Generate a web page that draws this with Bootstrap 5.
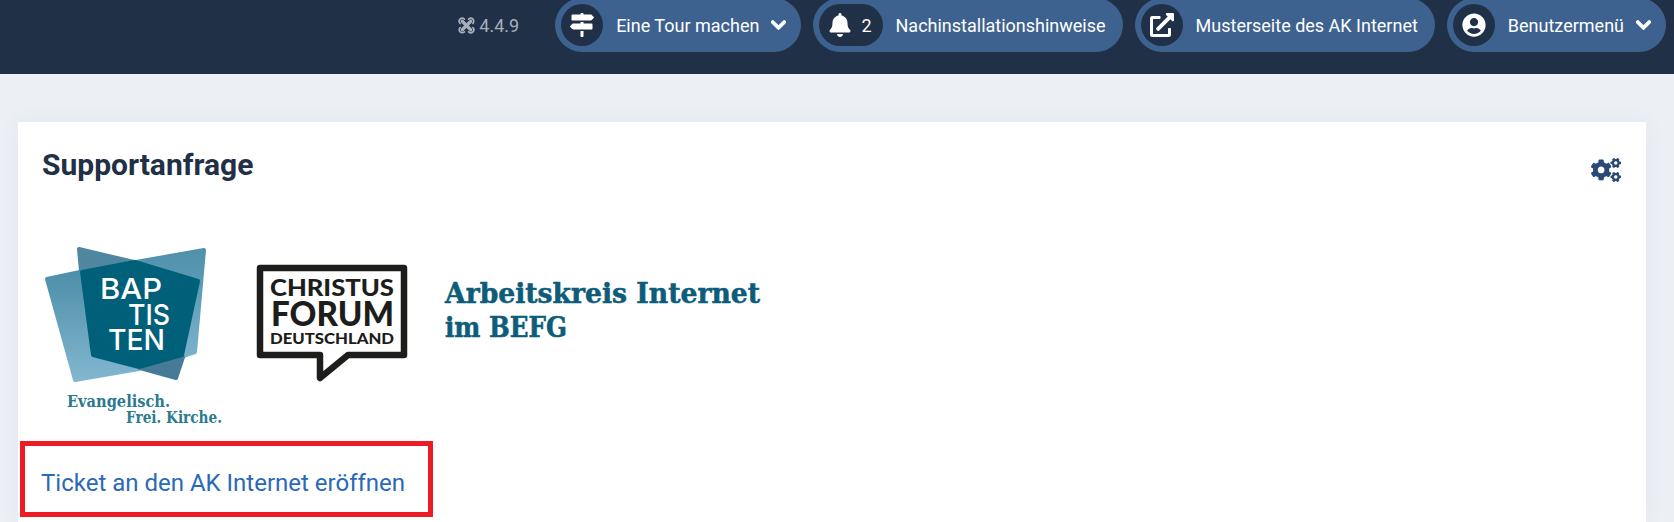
<!DOCTYPE html>
<html lang="de">
<head>
  <meta charset="UTF-8">
  <title>Supportanfrage</title>
  <link href="https://cdn.jsdelivr.net/npm/bootstrap@5.3.0/dist/css/bootstrap.min.css" rel="stylesheet">
  <style>
    html, body {
      height: 522px;
      overflow: hidden;
    }
    body {
      background: #ecf0f5;
      font-family: Roboto, "Liberation Sans", sans-serif;
      color: #1f3047;
    }
    .top-head {
      height: 74px;
      background: #1f3047;
      padding-right: 8px;
      gap: 12px;
    }
    .ver-info {
      color: #a7afba;
      font-size: 18px;
      height: 50px;
      margin-right: 24px;
      gap: 4px;
    }
    .ver-info svg {
      width: 17px;
      height: 17px;
    }
    .head-pill {
      height: 54px;
      margin-top: -2px;
      padding: 0 15px 0 6px;
      border-radius: 27px;
      background: #3e628f;
      color: #fff;
      font-size: 18px;
      text-decoration: none;
      white-space: nowrap;
    }
    .head-pill.no-arrow {
      padding-right: 17px;
    }
    .pill-icon {
      height: 42px;
      min-width: 42px;
      border-radius: 21px;
      background: #1f3047;
      margin-right: 13px;
      gap: 10px;
    }
    .pill-icon svg {
      height: 24px;
      width: 24px;
      fill: #fff;
    }
    .pill-icon.with-count {
      padding: 0 11px 0 10px;
    }
    .pill-icon.with-count svg {
      width: 22px;
    }
    .pill-arrow {
      width: 15px;
      height: 18px;
      fill: #fff;
      stroke: #fff;
      stroke-width: 30;
      margin-left: 12px;
    }
    .main-box {
      margin: 48px 28px 0 18px;
      height: 400px;
      padding: 22px 24px 0 23px;
      background: #fff;
      box-shadow: 0 0 20px rgba(60, 90, 140, .06);
    }
    .box-title {
      font-size: 30px;
      font-weight: 700;
      line-height: 42px;
      margin: 0 0 0 1px;
      color: #1f3047;
    }
    .box-gears {
      width: 30px;
      height: 24px;
      fill: #2a4a73;
      margin: 14px 1px 0 0;
    }
    .logo-strip {
      display: block;
      width: 731px;
      height: 196px;
      margin-top: 54px;
    }
    .ticket-box {
      width: 413px;
      height: 76px;
      margin: 5px 0 0 -21px;
      padding: 20px 0 0 16px;
      border: 5px solid #ed1c24;
      font-size: 24px;
      line-height: 34px;
    }
    .ticket-box a {
      color: #2a69b8;
      text-decoration: none;
    }
  </style>
</head>
<body>
  <header class="top-head d-flex justify-content-end align-items-start">
    <div class="ver-info d-flex align-items-center">
      <svg viewBox="0 0 16 16" fill="none" stroke="#a7afba" stroke-linecap="round">
        <path stroke-width="3" d="M4 4l8 8M12 4l-8 8"/>
        <path stroke-width="1.6" d="M2 6a2.8 2.8 0 0 1 4-4M10 2a2.8 2.8 0 0 1 4 4M14 10a2.8 2.8 0 0 1-4 4M6 14a2.8 2.8 0 0 1-4-4"/>
      </svg>
      <span>4.4.9</span>
    </div>

    <a href="#" class="head-pill d-flex align-items-center">
      <span class="pill-icon d-flex align-items-center justify-content-center">
        <svg viewBox="0 0 512 512"><path d="M507.31 84.69L464 41.37c-6-6-14.14-9.37-22.63-9.37H288V16c0-8.84-7.16-16-16-16h-32c-8.84 0-16 7.16-16 16v16H56c-13.25 0-24 10.75-24 24v80c0 13.25 10.75 24 24 24h385.37c8.49 0 16.62-3.37 22.63-9.37l43.31-43.31c6.25-6.26 6.25-16.38 0-22.63zM224 496c0 8.84 7.16 16 16 16h32c8.84 0 16-7.16 16-16V384h-64v112zm232-272H288v-32h-64v32H70.63c-8.49 0-16.62 3.37-22.63 9.37L4.69 276.69c-6.25 6.25-6.25 16.38 0 22.63L48 342.63c6 6 14.14 9.37 22.63 9.37H456c13.25 0 24-10.75 24-24v-80c0-13.25-10.75-24-24-24z"/></svg>
      </span>
      <span>Eine Tour machen</span>
      <svg class="pill-arrow" viewBox="0 0 448 512"><path d="M207.029 381.476L12.686 187.132c-9.373-9.373-9.373-24.569 0-33.941l22.667-22.667c9.357-9.357 24.522-9.375 33.901-.04L224 284.505l154.745-154.021c9.379-9.335 24.544-9.317 33.901.04l22.667 22.667c9.373 9.373 9.373 24.569 0 33.941L240.971 381.476c-9.373 9.372-24.569 9.372-33.942 0z"/></svg>
    </a>

    <a href="#" class="head-pill no-arrow d-flex align-items-center">
      <span class="pill-icon with-count d-flex align-items-center justify-content-center">
        <svg viewBox="0 0 448 512"><path d="M224 512c35.32 0 63.97-28.65 63.97-64H160.03c0 35.35 28.65 64 63.97 64zm215.39-149.71c-19.32-20.76-55.47-51.99-55.47-154.29 0-77.7-54.48-139.9-127.94-155.16V32c0-17.67-14.32-32-31.98-32s-31.98 14.33-31.98 32v20.84C118.56 68.1 64.08 130.3 64.08 208c0 102.3-36.15 133.53-55.47 154.29-6 6.45-8.66 14.16-8.61 21.71.11 16.4 12.98 32 32.1 32h383.8c19.12 0 32-15.6 32.1-32 .05-7.55-2.61-15.27-8.61-21.71z"/></svg>
        <span>2</span>
      </span>
      <span>Nachinstallationshinweise</span>
    </a>

    <a href="#" class="head-pill no-arrow d-flex align-items-center">
      <span class="pill-icon d-flex align-items-center justify-content-center">
        <svg viewBox="0 0 512 512"><path d="M432,320H400a16,16,0,0,0-16,16V448H64V128H208a16,16,0,0,0,16-16V80a16,16,0,0,0-16-16H48A48,48,0,0,0,0,112V464a48,48,0,0,0,48,48H400a48,48,0,0,0,48-48V336A16,16,0,0,0,432,320ZM488,0h-128c-21.37,0-32.05,25.91-17,41l35.73,35.73L135,320.37a24,24,0,0,0,0,34L157.67,377a24,24,0,0,0,34,0L435.28,133.32,471,169c15,15,41,4.5,41-17V24A24,24,0,0,0,488,0Z"/></svg>
      </span>
      <span>Musterseite des AK Internet</span>
    </a>

    <a href="#" class="head-pill d-flex align-items-center">
      <span class="pill-icon d-flex align-items-center justify-content-center">
        <svg viewBox="0 0 496 512"><path d="M248 8C111 8 0 119 0 256s111 248 248 248 248-111 248-248S385 8 248 8zm0 96c48.6 0 88 39.4 88 88s-39.4 88-88 88-88-39.4-88-88 39.4-88 88-88zm0 344c-58.7 0-111.3-26.6-146.5-68.2 18.8-35.4 55.6-59.8 98.5-59.8 2.4 0 4.8.4 7.1 1.1 13 4.2 26.6 6.9 40.9 6.9 14.3 0 28-2.7 40.9-6.9 2.3-.7 4.7-1.1 7.1-1.1 42.9 0 79.7 24.4 98.5 59.8C359.3 421.4 306.7 448 248 448z"/></svg>
      </span>
      <span>Benutzermenü</span>
      <svg class="pill-arrow" viewBox="0 0 448 512"><path d="M207.029 381.476L12.686 187.132c-9.373-9.373-9.373-24.569 0-33.941l22.667-22.667c9.357-9.357 24.522-9.375 33.901-.04L224 284.505l154.745-154.021c9.379-9.335 24.544-9.317 33.901.04l22.667 22.667c9.373 9.373 9.373 24.569 0 33.941L240.971 381.476c-9.373 9.372-24.569 9.372-33.942 0z"/></svg>
    </a>
  </header>

  <main class="main-box">
    <div class="d-flex justify-content-between align-items-start">
      <h2 class="box-title">Supportanfrage</h2>
      <svg class="box-gears" viewBox="0 0 640 512"><path d="M512.1 191l-8.2 14.3c-3 5.3-9.4 7.5-15.1 5.4-11.8-4.4-22.6-10.7-32.1-18.6-4.6-3.8-5.8-10.5-2.8-15.7l8.2-14.3c-6.9-8-12.3-17.3-15.9-27.4h-16.5c-6 0-11.2-4.3-12.2-10.3-2-12-2.1-24.6 0-37.1 1-6 6.2-10.4 12.2-10.4h16.5c3.6-10.1 9-19.4 15.9-27.4l-8.2-14.3c-3-5.2-1.9-11.9 2.8-15.7 9.5-7.9 20.4-14.2 32.1-18.6 5.7-2.1 12.1.1 15.1 5.4l8.2 14.3c10.5-1.9 21.2-1.9 31.7 0L552 6.3c3-5.3 9.4-7.5 15.1-5.4 11.8 4.4 22.6 10.7 32.1 18.6 4.6 3.8 5.8 10.5 2.8 15.7l-8.2 14.3c6.9 8 12.3 17.3 15.9 27.4h16.5c6 0 11.2 4.3 12.2 10.3 2 12 2.1 24.6 0 37.1-1 6-6.2 10.4-12.2 10.4h-16.5c-3.6 10.1-9 19.4-15.9 27.4l8.2 14.3c3 5.2 1.9 11.9-2.8 15.7-9.5 7.9-20.4 14.2-32.1 18.6-5.7 2.1-12.1-.1-15.1-5.4l-8.2-14.3c-10.4 1.9-21.2 1.9-31.7 0zm-10.5-58.8c38.5 29.6 82.4-14.3 52.8-52.8-38.5-29.7-82.4 14.3-52.8 52.8zM386.3 286.1l33.7 16.8c10.1 5.8 14.5 18.1 10.5 29.1-8.9 24.2-26.4 46.4-42.6 65.8-7.4 8.9-20.2 11.1-30.3 5.3l-29.1-16.8c-16 13.7-34.6 24.6-54.9 31.7v33.6c0 11.6-8.3 21.6-19.7 23.6-24.6 4.2-50.4 4.4-75.9 0-11.5-2-20-11.9-20-23.6V418c-20.3-7.2-38.9-18-54.9-31.7L74 403c-10 5.8-22.9 3.6-30.3-5.3-16.2-19.4-33.3-41.6-42.2-65.7-4-10.9.4-23.2 10.5-29.1l33.3-16.8c-3.9-20.9-3.9-42.4 0-63.4L12 205.8c-10.1-5.8-14.6-18.1-10.5-29 8.9-24.2 26-46.4 42.2-65.8 7.4-8.9 20.2-11.1 30.3-5.3l29.1 16.8c16-13.7 34.6-24.6 54.9-31.7V57.1c0-11.5 8.2-21.5 19.6-23.5 24.6-4.2 50.5-4.4 76-.1 11.5 2 20 11.9 20 23.6v33.6c20.3 7.2 38.9 18 54.9 31.7l29.1-16.8c10-5.8 22.9-3.6 30.3 5.3 16.2 19.4 33.2 41.6 42.1 65.8 4 10.9.1 23.2-10 29.1l-33.7 16.8c3.9 21 3.9 42.5 0 63.5zm-117.6 21.1c59.2-77-28.7-164.9-105.7-105.7-59.2 77 28.7 164.9 105.7 105.7zm243.4 182.7l-8.2 14.3c-3 5.3-9.4 7.5-15.1 5.4-11.8-4.4-22.6-10.7-32.1-18.6-4.6-3.8-5.8-10.5-2.8-15.7l8.2-14.3c-6.9-8-12.3-17.3-15.9-27.4h-16.5c-6 0-11.2-4.3-12.2-10.3-2-12-2.1-24.6 0-37.1 1-6 6.2-10.4 12.2-10.4h16.5c3.6-10.1 9-19.4 15.9-27.4l-8.2-14.3c-3-5.2-1.9-11.9 2.8-15.7 9.5-7.9 20.4-14.2 32.1-18.6 5.7-2.1 12.1.1 15.1 5.4l8.2 14.3c10.5-1.9 21.2-1.9 31.7 0l8.2-14.3c3-5.3 9.4-7.5 15.1-5.4 11.8 4.4 22.6 10.7 32.1 18.6 4.6 3.8 5.8 10.5 2.8 15.7l-8.2 14.3c6.9 8 12.3 17.3 15.9 27.4h16.5c6 0 11.2 4.3 12.2 10.3 2 12 2.1 24.6 0 37.1-1 6-6.2 10.4-12.2 10.4h-16.5c-3.6 10.1-9 19.4-15.9 27.4l8.2 14.3c3 5.2 1.9 11.9-2.8 15.7-9.5 7.9-20.4 14.2-32.1 18.6-5.7 2.1-12.1-.1-15.1-5.4l-8.2-14.3c-10.4 1.9-21.2 1.9-31.7 0zM501.6 431c38.5 29.6 82.4-14.3 52.8-52.8-38.5-29.6-82.4 14.3-52.8 52.8z"/></svg>
    </div>

    <!-- Logo-Leiste, Koordinaten wie im Original gemessen -->
    <svg class="logo-strip" viewBox="41 240 731 196">
      <defs>
        <linearGradient id="leftBlue" x1="0" y1="0" x2="0" y2="1">
          <stop offset="0" stop-color="#4e8fa9"/>
          <stop offset="1" stop-color="#82b6d0"/>
        </linearGradient>
        <linearGradient id="rightBlue" x1="0" y1="0" x2="0" y2="1">
          <stop offset="0" stop-color="#4f90ab"/>
          <stop offset="1" stop-color="#79b1cb"/>
        </linearGradient>
      </defs>
      <g stroke-linejoin="round" stroke-width="4">
        <polygon fill="url(#leftBlue)" stroke="url(#leftBlue)" points="47,279 80,272 92,355 139,369 75,380"/>
        <polygon fill="url(#rightBlue)" stroke="url(#rightBlue)" points="136,262 204,250 195,352 183,356 199,281"/>
        <polygon fill="#4f86a0" stroke="#4f86a0" points="79,249 134,262 81,271"/>
        <polygon fill="#467b97" stroke="#467b97" points="140,368 183,357 176,378"/>
        <polygon fill="#00607a" stroke="#00607a" points="82,272 135,262 198,281 182,355 139,367 93,355"/>
      </g>
      <g fill="#fff" font-family="Inter, 'Liberation Sans', sans-serif" font-size="29" font-weight="500">
        <text x="100" y="299" textLength="62" lengthAdjust="spacingAndGlyphs">BAP</text>
        <text x="128" y="325" textLength="42" lengthAdjust="spacingAndGlyphs">TIS</text>
        <text x="108" y="350" textLength="57" lengthAdjust="spacingAndGlyphs">TEN</text>
      </g>
      <g fill="#2a7a90" font-family="'DejaVu Serif Condensed', 'DejaVu Serif', serif" font-weight="700" font-size="16">
        <text x="67" y="407" textLength="103" lengthAdjust="spacingAndGlyphs">Evangelisch.</text>
        <text x="126" y="423" textLength="96" lengthAdjust="spacingAndGlyphs">Frei. Kirche.</text>
      </g>

      <path d="M260 268H404V355H348L320 378V355H260Z" fill="#fff" stroke="#1d1d1b" stroke-width="6.5" stroke-linejoin="round"/>
      <g fill="#1d1d1b" font-family="Lato, 'Liberation Sans', sans-serif" font-weight="900">
        <text x="270" y="296" font-size="23" textLength="124" lengthAdjust="spacingAndGlyphs">CHRISTUS</text>
        <text x="271" y="326" font-size="34" textLength="123" lengthAdjust="spacingAndGlyphs">FORUM</text>
        <text x="270" y="344" font-size="15" textLength="124" lengthAdjust="spacingAndGlyphs">DEUTSCHLAND</text>
      </g>

      <g fill="#0c5c7a" stroke="#0c5c7a" stroke-width=".5" font-family="'DejaVu Serif Condensed', 'DejaVu Serif', serif" font-weight="700" font-size="28">
        <text x="445" y="303" textLength="315" lengthAdjust="spacingAndGlyphs">Arbeitskreis Internet</text>
        <text x="445" y="337" textLength="122" lengthAdjust="spacingAndGlyphs">im BEFG</text>
      </g>
    </svg>

    <div class="ticket-box">
      <a href="#">Ticket an den AK Internet eröffnen</a>
    </div>
  </main>

  <script src="https://cdn.jsdelivr.net/npm/bootstrap@5.3.0/dist/js/bootstrap.bundle.min.js"></script>
</body>
</html>
